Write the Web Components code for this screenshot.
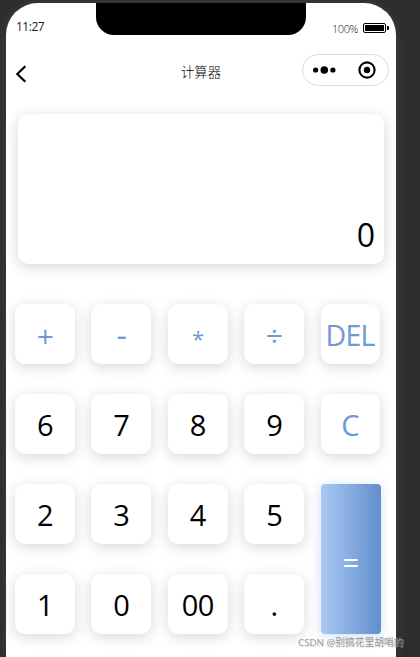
<!DOCTYPE html>
<html lang="zh-CN">
<head>
<meta charset="UTF-8">
<title>计算器</title>
<style>
    body {
        margin: 0;
        height: 657px;
        overflow: hidden;
        background: #2e2e2e;
        font-family: "Open Sans", "Noto Sans CJK SC", sans-serif;
    }
</style>
</head>
<body>
<phone-frame>
    <status-bar time="11:27" battery="100%"></status-bar>
    <nav-bar>计算器</nav-bar>
    <calc-display>0</calc-display>
    <calc-pad>
        <calc-key kind="op" class="sign">+</calc-key>
        <calc-key kind="op" class="minus">-</calc-key>
        <calc-key kind="op" class="times">*</calc-key>
        <calc-key kind="op" class="sign">÷</calc-key>
        <calc-key kind="op" class="del">DEL</calc-key>
        <calc-key>6</calc-key>
        <calc-key>7</calc-key>
        <calc-key>8</calc-key>
        <calc-key>9</calc-key>
        <calc-key kind="op" class="clear">C</calc-key>
        <calc-key>2</calc-key>
        <calc-key>3</calc-key>
        <calc-key>4</calc-key>
        <calc-key>5</calc-key>
        <calc-key kind="equal">=</calc-key>
        <calc-key>1</calc-key>
        <calc-key>0</calc-key>
        <calc-key>00</calc-key>
        <calc-key>.</calc-key>
    </calc-pad>
</phone-frame>
<water-mark>CSDN @别搞花里胡哨的</water-mark>

<script>
class BaseElement extends HTMLElement {
    constructor() {
        super();
        const template = document.createElement('template');
        template.innerHTML = this.constructor.markup;
        this.attachShadow({mode: 'open'});
        this.shadowRoot.appendChild(template.content.cloneNode(true));
    }
}

class PhoneFrame extends BaseElement {
    static markup = `
        <style>
            :host {
                display: flex;
                flex-direction: column;
                box-sizing: border-box;
                width: 390px;
                height: 654px;
                margin: 3px 0 0 6px;
                background: #fff;
                border-radius: 32px 32px 0 0;
                box-shadow: 0 0 10px rgba(80, 80, 80, 0.5);
                overflow: hidden;
            }
        </style>
        <slot></slot>
    `;
}

class StatusBar extends BaseElement {
    static markup = `
        <style>
            :host {
                display: grid;
                grid-template-columns: 90px 210px 90px;
                height: 46px;
                color: #222;
            }
            .time {
                padding: 15px 0 0 10px;
                font-size: 12px;
                line-height: 18px;
                letter-spacing: -0.5px;
            }
            .notch {
                height: 32px;
                background: #000;
                border-radius: 0 0 18px 18px;
            }
            .power {
                display: flex;
                align-items: center;
                justify-content: flex-end;
                gap: 5px;
                height: 18px;
                padding: 16px 7px 0 0;
                font-size: 11px;
                font-weight: 300;
                letter-spacing: -0.4px;
            }
            svg {
                display: block;
            }
        </style>
        <div class="time"></div>
        <div class="notch"></div>
        <div class="power">
            <span></span>
            <svg width="26" height="10" viewBox="0 0 26 10">
                <rect x=".5" y=".5" width="22" height="9" rx="1.5" fill="#fff" stroke="#000"/>
                <rect x="2" y="2" width="19" height="6" rx=".5"/>
                <path d="M24 3h1q1 0 1 1v2q0 1-1 1h-1z"/>
            </svg>
        </div>
    `;

    connectedCallback() {
        this.shadowRoot.querySelector('.time').textContent = this.getAttribute('time');
        this.shadowRoot.querySelector('.power span').textContent = this.getAttribute('battery');
    }
}

class NavBar extends BaseElement {
    static markup = `
        <style>
            :host {
                display: grid;
                grid-template-columns: 94px 1fr 94px;
                align-items: center;
                height: 46px;
                margin-bottom: 19px;
                color: #000;
            }
            .back {
                margin: 3px 0 0 9px;
            }
            .title {
                font-size: 13.3px;
                font-weight: 300;
                line-height: 20px;
                text-align: center;
            }
            .capsule {
                display: flex;
                align-items: center;
                justify-content: space-between;
                box-sizing: border-box;
                width: 87px;
                height: 32px;
                margin-top: -4px;
                padding: 0 12px 0 10px;
                border: 1px solid #dcdcdc;
                border-radius: 16px;
            }
            svg {
                display: block;
            }
        </style>
        <svg class="back" width="12" height="18" viewBox="0 0 12 18" fill="none" stroke="#000" stroke-width="2.2">
            <path d="M10.3 1.2 2.3 9l8 7.8"/>
        </svg>
        <div class="title"><slot></slot></div>
        <div class="capsule">
            <svg width="23" height="8" viewBox="0 0 23 8">
                <circle cx="2.6" cy="4" r="2.6"/>
                <circle cx="11.3" cy="4" r="3.8"/>
                <circle cx="19.9" cy="4" r="2.6"/>
            </svg>
            <svg width="18" height="18" viewBox="0 0 18 18">
                <circle cx="9" cy="9" r="7.6" fill="none" stroke="#000" stroke-width="2.1"/>
                <circle cx="9" cy="9" r="3.2"/>
            </svg>
        </div>
    `;
}

class CalcDisplay extends BaseElement {
    static markup = `
        <style>
            :host {
                display: flex;
                align-items: flex-end;
                justify-content: flex-end;
                box-sizing: border-box;
                width: 366px;
                height: 150px;
                margin-left: 12px;
                padding: 0 9px 8px 0;
                background: #fff;
                border-radius: 10px;
                box-shadow: 0 3px 14px rgba(0, 0, 0, 0.17);
                font-size: 32px;
                line-height: 42px;
            }
        </style>
        <slot></slot>
    `;
}

class CalcPad extends BaseElement {
    static markup = `
        <style>
            :host {
                display: grid;
                grid-template-columns: repeat(5, 60px);
                grid-auto-rows: 60px;
                gap: 30px 16.4px;
                margin: 40px 0 0 9px;
            }
        </style>
        <slot></slot>
    `;
}

class CalcKey extends BaseElement {
    static markup = `
        <style>
            :host {
                display: flex;
                align-items: center;
                justify-content: center;
                box-sizing: border-box;
                padding-top: 2px;
                background: #fff;
                border-radius: 10px;
                box-shadow: 0 3px 14px rgba(0, 0, 0, 0.16);
                color: #000;
                font-size: 29px;
                line-height: 58px;
                letter-spacing: -0.5px;
            }
            :host([kind="op"]) {
                color: #7099d2;
            }
            :host([kind="equal"]) {
                grid-row: span 2;
                padding-top: 5px;
                background: linear-gradient(to right, #a9c8f3, #618fcc);
                border-radius: 4px;
                box-shadow: 0 2px 12px rgba(112, 160, 220, 0.35);
                color: #fff;
                font-weight: 500;
            }
            :host(.del), :host(.clear) {
                width: 59px;
            }
            :host(.del) {
                font-size: 28.5px;
                letter-spacing: -0.7px;
            }
            :host(.sign) {
                padding-top: 4px;
                font-size: 30px;
                font-weight: 500;
            }
            :host(.minus) {
                font-size: 32px;
            }
            :host(.times) {
                padding-top: 8px;
                font-size: 22px;
                font-weight: 500;
            }
        </style>
        <span><slot></slot></span>
    `;
}

class WaterMark extends BaseElement {
    static markup = `
        <style>
            :host {
                position: absolute;
                left: 298px;
                top: 636px;
                color: rgba(145, 145, 145, 0.95);
                font-size: 9.75px;
                line-height: 14px;
                white-space: nowrap;
                text-shadow: 1px 1px 1px rgba(190, 190, 190, 0.5);
            }
        </style>
        <slot></slot>
    `;
}

window.customElements.define('phone-frame', PhoneFrame);
window.customElements.define('status-bar', StatusBar);
window.customElements.define('nav-bar', NavBar);
window.customElements.define('calc-display', CalcDisplay);
window.customElements.define('calc-pad', CalcPad);
window.customElements.define('calc-key', CalcKey);
window.customElements.define('water-mark', WaterMark);
</script>
</body>
</html>
